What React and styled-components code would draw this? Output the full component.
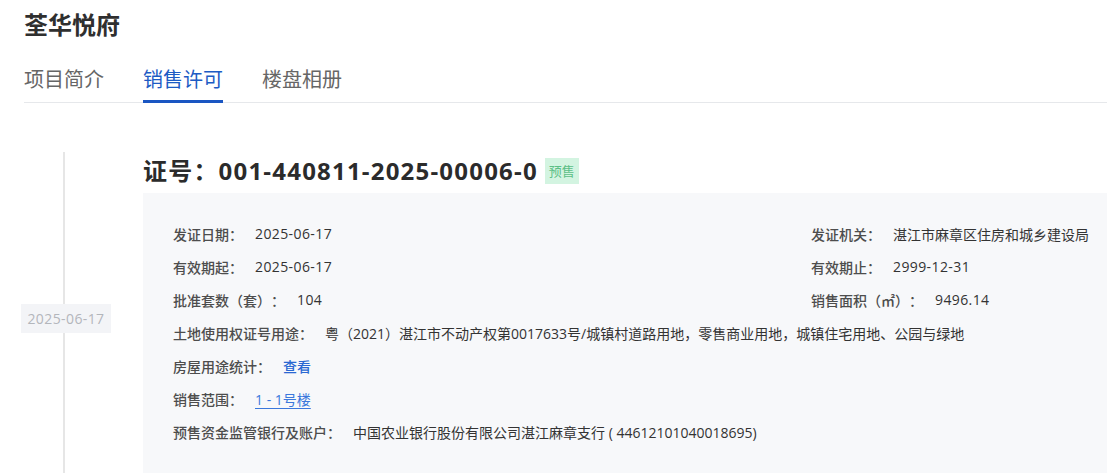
import React from "react";
import styled, { createGlobalStyle } from "styled-components";

const Global = createGlobalStyle`
  html, body { margin: 0; padding: 0; background: #fff; overflow: hidden; }
  body {
    font-family: "Open Sans", "Noto Sans CJK SC", sans-serif;
    color: #333;
    text-spacing-trim: space-all;
  }
`;

const Page = styled.div`
  padding-left: 24px;
  width: 1083px;
`;

const Title = styled.h1`
  margin: 8px 0 0;
  font-size: 24px;
  line-height: 32px;
  font-weight: 700;
  color: #2f2f2f;
  font-family: "Noto Sans CJK SC", sans-serif;
`;

const TabBar = styled.div`
  margin-top: 25px;
  display: flex;
  gap: 39px;
  border-bottom: 1px solid #e6e8eb;
`;

const Tab = styled.div`
  position: relative;
  font-family: "Noto Sans CJK SC", sans-serif;
  font-size: 20px;
  line-height: 28px;
  padding-bottom: 9px;
  color: ${(p) => (p.$active ? "#1d5bc4" : "#666")};
  &::after {
    content: "";
    display: ${(p) => (p.$active ? "block" : "none")};
    position: absolute;
    left: 0;
    right: 0;
    bottom: -1px;
    height: 3px;
    background: #1a56c2;
  }
`;

const Timeline = styled.div`
  margin-top: 49px;
  display: flex;
  margin-left: -24px;
`;

const Rail = styled.div`
  width: 128px;
  flex: none;
  margin-right: 15px;
  display: flex;
  align-items: center;
  justify-content: center;
  background: linear-gradient(#e6e6e6, #e6e6e6) no-repeat 63px 0 / 2px 100%;
`;

const DateTag = styled.div`
  background: #f3f4f7;
  color: #b3b6bc;
  font-size: 14px;
  line-height: 29px;
  padding: 0 6px;
  margin-left: 4px;
  letter-spacing: 0.4px;
  white-space: nowrap;
`;

const Content = styled.div`
  flex: 1;
  min-width: 0;
`;

const Header = styled.div`
  display: flex;
  align-items: center;
  gap: 7px;
  height: 38px;
`;

const CertNo = styled.h2`
  margin: 0;
  font-size: 24px;
  line-height: 38px;
  font-weight: 700;
  color: #2b2b2b;
  letter-spacing: 1.2px;
`;

const Badge = styled.span`
  background: #d3f4e1;
  color: #5cbf86;
  font-size: 13px;
  line-height: 26px;
  padding: 0 4px;
  font-family: "Noto Sans CJK SC", sans-serif;
`;

const Card = styled.div`
  margin-top: 3px;
  background: #f7f8fa;
  padding: 24px 0 36px 30px;
  display: grid;
  grid-template-columns: 638px 1fr;
`;

const Row = styled.div`
  display: flex;
  gap: 12px;
  height: 33px;
  align-items: center;
  white-space: nowrap;
  grid-column: ${(p) => (p.$full ? "1 / -1" : "auto")};
`;

const Label = styled.span`
  font-family: "Noto Sans CJK SC", sans-serif;
  font-size: 14px;
  font-weight: 500;
  color: #4d4d4d;
`;

const Value = styled.span`
  font-size: 14px;
  color: #333;
  letter-spacing: ${(p) => (p.$num ? "0.4px" : "0")};
`;

const LinkText = styled.span`
  font-size: 14px;
  color: ${(p) => (p.$underline ? "#3b78dc" : "#2a68d2")};
  text-decoration: ${(p) => (p.$underline ? "underline" : "none")};
  text-underline-offset: 3px;
  font-weight: ${(p) => (p.$underline ? 400 : 500)};
  cursor: pointer;
`;

export default function App() {
  return (
    <>
      <Global />
      <Page>
        <Title>荃华悦府</Title>
        <TabBar>
          <Tab>项目简介</Tab>
          <Tab $active>销售许可</Tab>
          <Tab>楼盘相册</Tab>
        </TabBar>
        <Timeline>
          <Rail>
            <DateTag>2025-06-17</DateTag>
          </Rail>
          <Content>
            <Header>
              <CertNo>证号：001-440811-2025-00006-0</CertNo>
              <Badge>预售</Badge>
            </Header>
            <Card>
              <Row>
                <Label>发证日期：</Label>
                <Value $num>2025-06-17</Value>
              </Row>
              <Row>
                <Label>发证机关：</Label>
                <Value>湛江市麻章区住房和城乡建设局</Value>
              </Row>
              <Row>
                <Label>有效期起：</Label>
                <Value $num>2025-06-17</Value>
              </Row>
              <Row>
                <Label>有效期止：</Label>
                <Value $num>2999-12-31</Value>
              </Row>
              <Row>
                <Label>批准套数（套）：</Label>
                <Value $num>104</Value>
              </Row>
              <Row>
                <Label>销售面积（㎡）：</Label>
                <Value $num>9496.14</Value>
              </Row>
              <Row $full>
                <Label>土地使用权证号用途：</Label>
                <Value>粤（2021）湛江市不动产权第0017633号/城镇村道路用地，零售商业用地，城镇住宅用地、公园与绿地</Value>
              </Row>
              <Row $full>
                <Label>房屋用途统计：</Label>
                <LinkText>查看</LinkText>
              </Row>
              <Row $full>
                <Label>销售范围：</Label>
                <LinkText $underline>1 - 1号楼</LinkText>
              </Row>
              <Row $full>
                <Label>预售资金监管银行及账户：</Label>
                <Value>中国农业银行股份有限公司湛江麻章支行 ( 44612101040018695)</Value>
              </Row>
            </Card>
          </Content>
        </Timeline>
      </Page>
    </>
  );
}
